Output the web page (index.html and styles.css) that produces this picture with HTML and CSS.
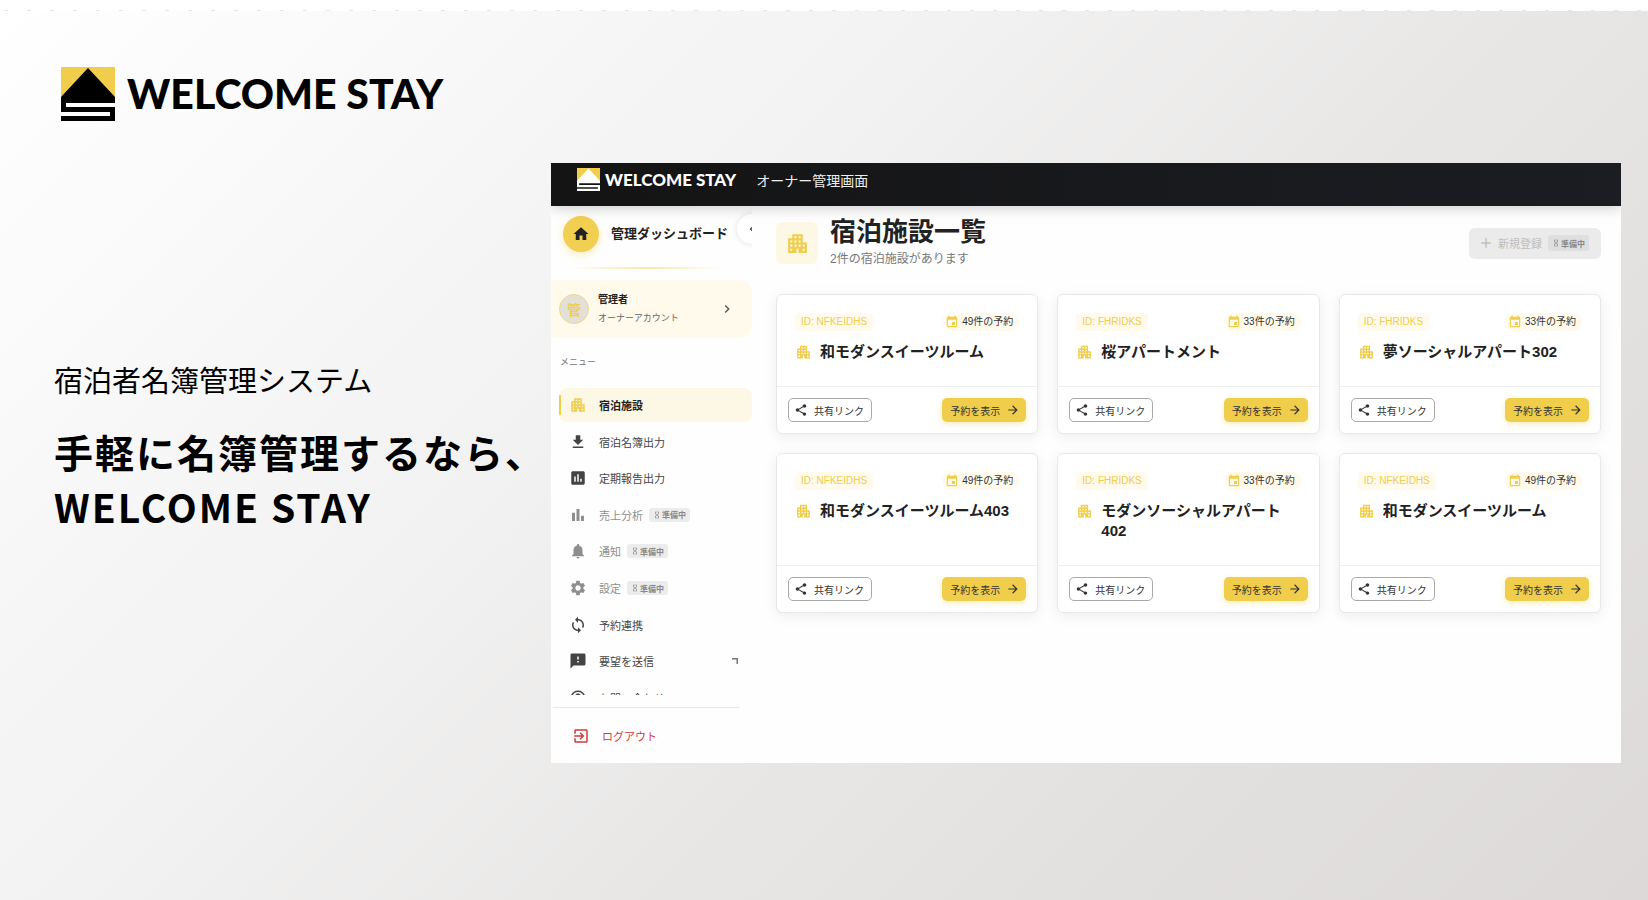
FILE: index.html
```html
<!DOCTYPE html>
<html lang="ja">
<head>
    <meta charset="UTF-8">
    <meta name="viewport" content="width=device-width, initial-scale=1.0">
    <title>WELCOME STAY</title>
    <link rel="stylesheet" href="styles.css">
</head>
<body>
    <!-- Icon sprite -->
    <svg class="sprite" aria-hidden="true">
        <symbol id="logo" viewBox="0 0 54 54">
            <rect width="54" height="30" fill="#f0cd4b"/>
            <path d="M27 1L54 30V36H5V40H54V54H0V49H49V45H0V30Z"/>
        </symbol>
        <symbol id="building" viewBox="0 0 24 24"><path d="M17 11V3H7v4H3v14h8v-4h2v4h8V11h-4zM7 19H5v-2h2v2zm0-4H5v-2h2v2zm0-4H5V9h2v2zm4 4H9v-2h2v2zm0-4H9V9h2v2zm0-4H9V5h2v2zm4 8h-2v-2h2v2zm0-4h-2V9h2v2zm0-4h-2V5h2v2zm4 12h-2v-2h2v2zm0-4h-2v-2h2v2z"/></symbol>
        <symbol id="home" viewBox="0 0 24 24"><path d="M10 20v-6h4v6h5v-8h3L12 3 2 12h3v8z"/></symbol>
        <symbol id="chevron-left" viewBox="0 0 24 24"><path d="M15.41 7.41L14 6l-6 6 6 6 1.41-1.41L10.83 12z"/></symbol>
        <symbol id="chevron-right" viewBox="0 0 24 24"><path d="M10 6L8.59 7.41 13.17 12l-4.58 4.59L10 18l6-6z"/></symbol>
        <symbol id="download" viewBox="0 0 24 24"><path d="M19 9h-4V3H9v6H5l7 7 7-7zM5 18v2h14v-2H5z"/></symbol>
        <symbol id="report" viewBox="0 0 24 24"><path d="M19 3H5c-1.1 0-2 .9-2 2v14c0 1.1.9 2 2 2h14c1.1 0 2-.9 2-2V5c0-1.1-.9-2-2-2zM9 17H7v-7h2v7zm4 0h-2V7h2v10zm4 0h-2v-4h2v4z"/></symbol>
        <symbol id="chart" viewBox="0 0 24 24"><path d="M4 9h4v11H4zM16 13h4v7h-4zM10 4h4v16h-4z"/></symbol>
        <symbol id="bell" viewBox="0 0 24 24"><path d="M12 22c1.1 0 2-.9 2-2h-4c0 1.1.89 2 2 2zm6-6v-5c0-3.07-1.64-5.64-4.5-6.32V4c0-.83-.67-1.5-1.5-1.5s-1.5.67-1.5 1.5v.68C7.63 5.36 6 7.92 6 11v5l-2 2v1h16v-1l-2-2z"/></symbol>
        <symbol id="gear" viewBox="0 0 24 24"><path d="M19.14 12.94c.04-.3.06-.61.06-.94 0-.32-.02-.64-.07-.94l2.03-1.58c.18-.14.23-.41.12-.61l-1.92-3.32c-.12-.22-.37-.29-.59-.22l-2.39.96c-.5-.38-1.03-.7-1.62-.94l-.36-2.54c-.04-.24-.24-.41-.48-.41h-3.84c-.24 0-.43.17-.47.41l-.36 2.54c-.59.24-1.13.57-1.62.94l-2.39-.96c-.22-.08-.47 0-.59.22L2.74 8.87c-.12.21-.08.47.12.61l2.03 1.58c-.05.3-.09.63-.09.94s.02.64.07.94l-2.03 1.58c-.18.14-.23.41-.12.61l1.92 3.32c.12.22.37.29.59.22l2.39-.96c.5.38 1.03.7 1.62.94l.36 2.54c.05.24.24.41.48.41h3.84c.24 0 .44-.17.47-.41l.36-2.54c.59-.24 1.13-.56 1.62-.94l2.39.96c.22.08.47 0 .59-.22l1.92-3.32c.12-.22.07-.47-.12-.61l-2.01-1.58zM12 15.6c-1.98 0-3.6-1.62-3.6-3.6s1.62-3.6 3.6-3.6 3.6 1.62 3.6 3.6-1.62 3.6-3.6 3.6z"/></symbol>
        <symbol id="sync" viewBox="0 0 24 24"><path d="M12 4V1L8 5l4 4V6c3.31 0 6 2.69 6 6 0 1.01-.25 1.97-.7 2.8l1.46 1.46C19.54 15.03 20 13.57 20 12c0-4.42-3.58-8-8-8zm0 14c-3.31 0-6-2.69-6-6 0-1.01.25-1.97.7-2.8L5.24 7.74C4.46 8.97 4 10.43 4 12c0 4.42 3.58 8 8 8v3l4-4-4-4v3z"/></symbol>
        <symbol id="feedback" viewBox="0 0 24 24"><path d="M20 2H4c-1.1 0-1.99.9-1.99 2L2 22l4-4h14c1.1 0 2-.9 2-2V4c0-1.1-.9-2-2-2zm-7 12h-2v-2h2v2zm0-4h-2V6h2v4z"/></symbol>
        <symbol id="help" viewBox="0 0 24 24"><path d="M11 18h2v-2h-2v2zm1-16C6.48 2 2 6.48 2 12s4.48 10 10 10 10-4.48 10-10S17.52 2 12 2zm0 18c-4.41 0-8-3.59-8-8s3.59-8 8-8 8 3.59 8 8-3.59 8-8 8zm0-14c-2.21 0-4 1.79-4 4h2c0-1.1.9-2 2-2s2 .9 2 2c0 2-3 1.75-3 5h2c0-2.25 3-2.5 3-5 0-2.21-1.79-4-4-4z"/></symbol>
        <symbol id="corner" viewBox="0 0 6 6"><path d="M0 0H6V6H4.5V1.5H0Z"/></symbol>
        <symbol id="exit" viewBox="0 0 24 24"><path d="M10.09 15.59L11.5 17l5-5-5-5-1.41 1.41L12.67 11H3v2h9.67l-2.58 2.59zM19 3H5c-1.11 0-2 .9-2 2v4h2V5h14v14H5v-4H3v4c0 1.1.89 2 2 2h14c1.1 0 2-.9 2-2V5c0-1.1-.9-2-2-2z"/></symbol>
        <symbol id="hourglass" viewBox="0 0 24 24"><path d="M6 2v6h.01L6 8.01 10 12l-4 4 .01.01H6V22h12v-5.99h-.01L18 16l-4-4 4-3.99-.01-.01H18V2H6zm10 14.5V20H8v-3.5l4-4 4 4zm-4-5l-4-4V4h8v3.5l-4 4z"/></symbol>
        <symbol id="plus" viewBox="0 0 24 24"><path d="M19 13h-6v6h-2v-6H5v-2h6V5h2v6h6v2z"/></symbol>
        <symbol id="event" viewBox="0 0 24 24"><path d="M17 12h-5v5h5v-5zM16 1v2H8V1H6v2H5c-1.11 0-1.99.9-1.99 2L3 19c0 1.1.89 2 2 2h14c1.1 0 2-.9 2-2V5c0-1.1-.9-2-2-2h-1V1h-2zm3 18H5V8h14v11z"/></symbol>
        <symbol id="share" viewBox="0 0 24 24"><path d="M18 16.08c-.76 0-1.44.3-1.96.77L8.91 12.7c.05-.23.09-.46.09-.7s-.04-.47-.09-.7l7.05-4.11c.54.5 1.25.81 2.04.81 1.66 0 3-1.34 3-3s-1.34-3-3-3-3 1.34-3 3c0 .24.04.47.09.7L8.04 9.81C7.5 9.31 6.79 9 6 9c-1.66 0-3 1.34-3 3s1.34 3 3 3c.79 0 1.5-.31 2.04-.81l7.12 4.16c-.05.21-.08.43-.08.65 0 1.61 1.31 2.92 2.92 2.92s2.92-1.31 2.92-2.92-1.31-2.92-2.92-2.92z"/></symbol>
        <symbol id="arrow" viewBox="0 0 24 24"><path d="M12 4l-1.41 1.41L16.17 11H4v2h12.17l-5.58 5.59L12 20l8-8z"/></symbol>
    </svg>

    <div class="top-strip"></div>

    <header class="brand">
        <svg class="brand-mark"><use href="#logo"/></svg>
        <span class="brand-name">WELCOME STAY</span>
    </header>

    <div class="hero">
        <section class="intro">
            <p class="lead">宿泊者名簿管理システム</p>
            <h1 class="headline">手軽に名簿管理するなら、<br>WELCOME STAY</h1>
        </section>

        <div class="app">
            <div class="topbar">
                <svg class="topbar-mark"><use href="#logo"/></svg>
                <span class="topbar-name">WELCOME STAY</span>
                <span class="topbar-title">オーナー管理画面</span>
            </div>

            <div class="app-body">
                <aside class="sidebar">
                    <div class="side-head">
                        <span class="home"><svg class="icon"><use href="#home"/></svg></span>
                        <span class="side-title">管理ダッシュボード</span>
                        <button class="collapse" type="button" aria-label="閉じる"><svg class="icon-sm"><use href="#chevron-left"/></svg></button>
                    </div>
                    <div class="side-line"></div>

                    <button class="user" type="button">
                        <span class="avatar">管</span>
                        <span class="user-text">
                            <strong>管理者</strong>
                            <small>オーナーアカウント</small>
                        </span>
                        <svg class="icon-md"><use href="#chevron-right"/></svg>
                    </button>

                    <p class="menu-label">メニュー</p>
                    <nav class="menu">
                        <ul>
                            <li><a class="active" href="#"><svg class="icon"><use href="#building"/></svg>宿泊施設</a></li>
                            <li><a href="#"><svg class="icon"><use href="#download"/></svg>宿泊名簿出力</a></li>
                            <li><a href="#"><svg class="icon"><use href="#report"/></svg>定期報告出力</a></li>
                            <li><a class="disabled" href="#"><svg class="icon"><use href="#chart"/></svg>売上分析<span class="soon"><svg class="icon-xs"><use href="#hourglass"/></svg>準備中</span></a></li>
                            <li><a class="disabled" href="#"><svg class="icon"><use href="#bell"/></svg>通知<span class="soon"><svg class="icon-xs"><use href="#hourglass"/></svg>準備中</span></a></li>
                            <li><a class="disabled" href="#"><svg class="icon"><use href="#gear"/></svg>設定<span class="soon"><svg class="icon-xs"><use href="#hourglass"/></svg>準備中</span></a></li>
                            <li><a href="#"><svg class="icon"><use href="#sync"/></svg>予約連携</a></li>
                            <li><a href="#"><svg class="icon"><use href="#feedback"/></svg>要望を送信<svg class="corner"><use href="#corner"/></svg></a></li>
                            <li><a href="#"><svg class="icon"><use href="#help"/></svg>お問い合わせ</a></li>
                        </ul>
                    </nav>

                    <a class="logout" href="#"><svg class="icon"><use href="#exit"/></svg>ログアウト</a>
                </aside>

                <main class="main">
                    <div class="page-head">
                        <span class="page-icon"><svg><use href="#building"/></svg></span>
                        <div class="page-text">
                            <h2>宿泊施設一覧</h2>
                            <p>2件の宿泊施設があります</p>
                        </div>
                        <button class="new-btn" type="button" disabled><svg class="icon-md"><use href="#plus"/></svg>新規登録<span class="soon"><svg class="icon-xs"><use href="#hourglass"/></svg>準備中</span></button>
                    </div>

                    <div class="cards">
                        <article class="card">
                            <div class="card-body">
                                <div class="card-meta">
                                    <span class="id-chip">ID: NFKEIDHS</span>
                                    <span class="count-chip"><svg class="icon-sm"><use href="#event"/></svg>49件の予約</span>
                                </div>
                                <h3><svg><use href="#building"/></svg>和モダンスイーツルーム</h3>
                            </div>
                            <div class="card-foot">
                                <button class="btn btn-share" type="button"><svg class="icon-sm"><use href="#share"/></svg>共有リンク</button>
                                <button class="btn btn-show" type="button">予約を表示<svg class="icon-sm"><use href="#arrow"/></svg></button>
                            </div>
                        </article>

                        <article class="card">
                            <div class="card-body">
                                <div class="card-meta">
                                    <span class="id-chip">ID: FHRIDKS</span>
                                    <span class="count-chip"><svg class="icon-sm"><use href="#event"/></svg>33件の予約</span>
                                </div>
                                <h3><svg><use href="#building"/></svg>桜アパートメント</h3>
                            </div>
                            <div class="card-foot">
                                <button class="btn btn-share" type="button"><svg class="icon-sm"><use href="#share"/></svg>共有リンク</button>
                                <button class="btn btn-show" type="button">予約を表示<svg class="icon-sm"><use href="#arrow"/></svg></button>
                            </div>
                        </article>

                        <article class="card">
                            <div class="card-body">
                                <div class="card-meta">
                                    <span class="id-chip">ID: FHRIDKS</span>
                                    <span class="count-chip"><svg class="icon-sm"><use href="#event"/></svg>33件の予約</span>
                                </div>
                                <h3><svg><use href="#building"/></svg>夢ソーシャルアパート302</h3>
                            </div>
                            <div class="card-foot">
                                <button class="btn btn-share" type="button"><svg class="icon-sm"><use href="#share"/></svg>共有リンク</button>
                                <button class="btn btn-show" type="button">予約を表示<svg class="icon-sm"><use href="#arrow"/></svg></button>
                            </div>
                        </article>

                        <article class="card">
                            <div class="card-body">
                                <div class="card-meta">
                                    <span class="id-chip">ID: NFKEIDHS</span>
                                    <span class="count-chip"><svg class="icon-sm"><use href="#event"/></svg>49件の予約</span>
                                </div>
                                <h3><svg><use href="#building"/></svg>和モダンスイーツルーム403</h3>
                            </div>
                            <div class="card-foot">
                                <button class="btn btn-share" type="button"><svg class="icon-sm"><use href="#share"/></svg>共有リンク</button>
                                <button class="btn btn-show" type="button">予約を表示<svg class="icon-sm"><use href="#arrow"/></svg></button>
                            </div>
                        </article>

                        <article class="card">
                            <div class="card-body">
                                <div class="card-meta">
                                    <span class="id-chip">ID: FHRIDKS</span>
                                    <span class="count-chip"><svg class="icon-sm"><use href="#event"/></svg>33件の予約</span>
                                </div>
                                <h3><svg><use href="#building"/></svg>モダンソーシャルアパート402</h3>
                            </div>
                            <div class="card-foot">
                                <button class="btn btn-share" type="button"><svg class="icon-sm"><use href="#share"/></svg>共有リンク</button>
                                <button class="btn btn-show" type="button">予約を表示<svg class="icon-sm"><use href="#arrow"/></svg></button>
                            </div>
                        </article>

                        <article class="card">
                            <div class="card-body">
                                <div class="card-meta">
                                    <span class="id-chip">ID: NFKEIDHS</span>
                                    <span class="count-chip"><svg class="icon-sm"><use href="#event"/></svg>49件の予約</span>
                                </div>
                                <h3><svg><use href="#building"/></svg>和モダンスイーツルーム</h3>
                            </div>
                            <div class="card-foot">
                                <button class="btn btn-share" type="button"><svg class="icon-sm"><use href="#share"/></svg>共有リンク</button>
                                <button class="btn btn-show" type="button">予約を表示<svg class="icon-sm"><use href="#arrow"/></svg></button>
                            </div>
                        </article>
                    </div>
                </main>
            </div>
        </div>
    </div>
</body>
</html>
```
FILE: styles.css
```css
* {
    margin: 0;
    padding: 0;
    box-sizing: border-box;
}

body {
    min-height: 100vh;
    background: linear-gradient(135deg, #ffffff 0%, #f2f1f1 40%, #e7e6e5 62%, #dcd9d8 100%);
    font-family: "Liberation Sans", "Noto Sans CJK JP", sans-serif;
    color: #222;
}

button {
    font-family: inherit;
    border: none;
    cursor: pointer;
}

a {
    color: inherit;
    text-decoration: none;
}

svg {
    display: block;
    flex: none;
    fill: currentColor;
}

.sprite {
    position: absolute;
    width: 0;
    height: 0;
}

.icon {
    width: 18px;
    height: 18px;
}

.icon-md {
    width: 16px;
    height: 16px;
}

.icon-sm {
    width: 14px;
    height: 14px;
}

.icon-xs {
    width: 8px;
    height: 8px;
}

/* Page */
.top-strip {
    height: 11px;
    background: repeating-linear-gradient(90deg, #fff 0 4px, #e6e6e6 4px 8px, #fff 8px 23px) bottom / 100% 1px no-repeat #fff;
}

.brand {
    display: flex;
    align-items: center;
    gap: 12px;
    padding: 55px 61px 41px;
    color: #000;
}

.brand-mark {
    width: 54px;
    height: 54px;
}

.brand-name {
    font-family: Lato, sans-serif;
    font-size: 41px;
    font-weight: 900;
    line-height: 56px;
}

.hero {
    display: grid;
    grid-template-columns: minmax(0, 497fr) minmax(0, 1070fr);
    padding: 0 27px 40px 54px;
}

.intro {
    padding-top: 196px;
    font-family: "Noto Sans CJK JP", sans-serif;
    color: #000;
    white-space: nowrap;
}

.lead {
    margin-bottom: 25px;
    font-size: 29px;
    line-height: 40px;
}

.headline {
    font-size: 39px;
    font-weight: 700;
    line-height: 55px;
    letter-spacing: 2px;
}

/* App window */
.app {
    overflow: hidden;
    background: #fefefe;
}

.topbar {
    position: relative;
    z-index: 1;
    display: flex;
    align-items: center;
    height: 43px;
    padding: 0 26px 10px;
    background: linear-gradient(90deg, #141414, #1b1d23);
    box-shadow: 0 2px 14px rgba(0, 0, 0, 0.2);
    color: #fff;
}

.topbar-mark {
    width: 23px;
    height: 23px;
    margin-right: 5px;
}

.topbar-name {
    margin-right: 20px;
    font-family: Lato, sans-serif;
    font-size: 17px;
    font-weight: 900;
}

.topbar-title {
    font-size: 14px;
    color: #eee;
}

.app-body {
    display: flex;
}

/* Sidebar */
.sidebar {
    flex: 0 0 201px;
    overflow: hidden;
}

.side-head {
    position: relative;
    display: flex;
    align-items: center;
    gap: 12px;
    padding: 10px 12px 15px;
}

.home {
    display: grid;
    place-items: center;
    width: 36px;
    height: 36px;
    border-radius: 50%;
    background: #f1cf50;
    box-shadow: 0 3px 8px rgba(240, 205, 75, 0.35);
}

.side-title {
    font-size: 13px;
    font-weight: 600;
    line-height: 20px;
    white-space: nowrap;
}

.collapse {
    position: absolute;
    top: 8px;
    right: -15px;
    display: grid;
    place-items: center;
    width: 30px;
    height: 30px;
    border-radius: 50%;
    background: #fff;
    box-shadow: 0 0 6px rgba(0, 0, 0, 0.12);
    color: #333;
}

.side-line {
    height: 2px;
    margin: 0 30px 11px 20px;
    background: linear-gradient(90deg, transparent, #fae7a8, transparent);
}

.user {
    display: flex;
    align-items: center;
    gap: 9px;
    width: 100%;
    height: 58px;
    padding: 0 17px 0 8px;
    border-radius: 0 12px 12px 0;
    background: #fffaec;
    color: #555;
    text-align: left;
}

.avatar {
    display: grid;
    place-items: center;
    width: 30px;
    height: 30px;
    border: 1px solid #eed88a;
    border-radius: 50%;
    background: #e3e0d8;
    color: #f0cd4b;
    font-size: 14px;
    font-weight: 600;
}

.user-text {
    flex: 1;
    display: grid;
}

.user-text strong {
    font-size: 10px;
    line-height: 18px;
    color: #222;
}

.user-text small {
    font-size: 9px;
    line-height: 18px;
    color: #666;
}

.menu-label {
    padding-left: 9px;
    margin: 16px 0 17px;
    font-size: 9px;
    line-height: 16px;
    color: #777;
}

.menu {
    height: 308px;
    margin-bottom: 12px;
    overflow: hidden;
}

.menu ul {
    display: grid;
    grid-auto-rows: 1fr;
    align-items: center;
    height: 329px;
    padding-left: 8px;
    list-style: none;
}

.menu a {
    position: relative;
    display: flex;
    align-items: center;
    gap: 12px;
    height: 34px;
    padding: 0 14px 0 10px;
    border-radius: 8px;
    font-size: 11px;
    color: #444;
}

.menu a.active {
    background: #fdf8e6;
    color: #222;
    font-weight: 600;
}

.menu a.active::before {
    content: "";
    position: absolute;
    left: 0;
    top: 7px;
    width: 2px;
    height: 20px;
    background: #f0cd4b;
}

.menu a.active .icon {
    color: #f0cd4b;
}

.menu a.disabled {
    color: #8e8e8e;
}

.corner {
    width: 6px;
    height: 6px;
    margin-left: auto;
    color: #777;
}

.soon {
    display: flex;
    align-items: center;
    gap: 1px;
    height: 14px;
    padding: 0 4px;
    border-radius: 3px;
    background: #ececec;
    color: #888;
    font-size: 8px;
    font-weight: 600;
}

.menu .soon {
    margin-left: -6px;
}

.logout {
    display: flex;
    align-items: center;
    gap: 12px;
    height: 56px;
    margin: 0 12px 0 2px;
    padding-left: 19px;
    border-top: 1px solid #e8e8e8;
    color: #cf3a3a;
    font-size: 11px;
}

/* Main */
.main {
    flex: 1;
    min-width: 0;
    padding: 10px 20px 40px 24px;
}

.page-head {
    display: flex;
    align-items: center;
    gap: 12px;
    padding-bottom: 26px;
}

.page-icon {
    display: grid;
    place-items: center;
    width: 42px;
    height: 42px;
    margin-top: 2px;
    border-radius: 6px;
    background: #fdf8e5;
    color: #f0cd4b;
}

.page-icon svg {
    width: 25px;
    height: 25px;
}

.page-text {
    flex: 1;
}

.page-text h2 {
    font-size: 26px;
    font-weight: 600;
    line-height: 33px;
}

.page-text p {
    margin-top: 1px;
    font-size: 12px;
    line-height: 18px;
    color: #777;
}

.new-btn {
    display: flex;
    align-items: center;
    height: 31px;
    margin-top: 2px;
    padding: 0 12px 0 9px;
    border-radius: 6px;
    background: #ebebeb;
    color: #bdbdbd;
    font-size: 11px;
    cursor: default;
}

.new-btn .icon-md {
    margin-right: 4px;
}

.new-btn .soon {
    height: 16px;
    margin-left: 6px;
    background: #dfdfdf;
}

/* Cards */
.cards {
    display: grid;
    grid-template-columns: repeat(3, 1fr);
    gap: 19px;
}

.card {
    display: flex;
    flex-direction: column;
    border: 1px solid #e8e8e8;
    border-radius: 6px;
    background: #fff;
    box-shadow: 0 3px 14px rgba(0, 0, 0, 0.07);
}

.card-body {
    flex: 1;
    padding: 18px 18px 24px;
}

.card-meta {
    display: flex;
    justify-content: space-between;
    margin-bottom: 11px;
    font-size: 10px;
    line-height: 18px;
}

.id-chip {
    padding: 0 6px;
    border-radius: 4px;
    background: #fffaec;
    color: #f0cd4b;
}

.count-chip {
    display: flex;
    align-items: center;
    gap: 3px;
    padding: 0 6px 0 3px;
    border-radius: 9px;
    background: #fffaec;
    color: #333;
}

.count-chip svg {
    color: #f0cd4b;
}

.card h3 {
    display: flex;
    gap: 8px;
    font-size: 15px;
    font-weight: 600;
    line-height: 20px;
}

.card h3 svg {
    width: 17px;
    height: 20px;
    color: #f0cd4b;
}

.card-foot {
    display: flex;
    justify-content: space-between;
    padding: 11px;
    border-top: 1px solid #eee;
}

.btn {
    display: flex;
    align-items: center;
    gap: 6px;
    height: 24px;
    border-radius: 5px;
    font-size: 10px;
    color: #333;
}

.btn-share {
    padding: 0 7px 0 5px;
    border: 1px solid #aaa;
    background: #fff;
}

.btn-show {
    padding: 0 6px 0 8px;
    background: #f0cd4b;
    box-shadow: 0 2px 6px rgba(240, 205, 75, 0.35);
}
```
